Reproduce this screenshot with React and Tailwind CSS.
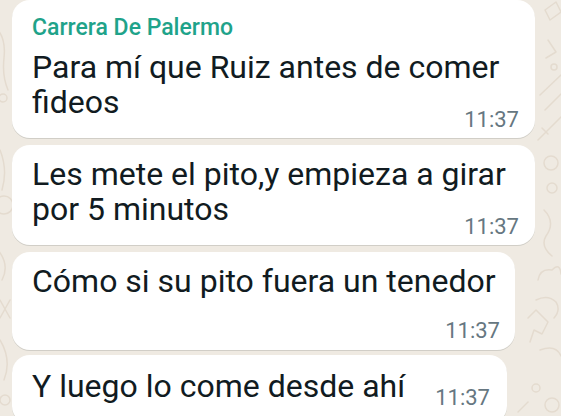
import React from 'react';

// faint chat-wallpaper doodles, sits under the bubbles
function Doodles() {
  return (
    <svg className="absolute inset-0" width="561" height="416" viewBox="0 0 561 416" fill="none" stroke="#e4dbcf" strokeWidth="1.5" strokeLinecap="round" strokeLinejoin="round">
      {/* left edge */}
      <path d="M-2 30 Q6 40 4 58 Q2 76 8 90" />
      <circle cx="3" cy="98" r="4" />
      <path d="M0 150 Q8 170 2 190" />
      <circle cx="4" cy="205" r="9" />
      <path d="M-2 250 Q10 265 2 280" />
      <path d="M0 300 L10 318 M10 300 L0 318" />
      <path d="M0 340 Q12 360 4 380" />
      <circle cx="5" cy="400" r="5" />
      {/* right edge */}
      <path d="M545 10 L556 2 L561 12 L550 20 Z" />
      <path d="M548 40 L556 52 L546 58" />
      <circle cx="554" cy="67" r="3" />
      <path d="M540 95 L561 75 M545 110 L561 94 M538 140 L561 117 M542 128 L548 134" />
      <circle cx="551" cy="163" r="7" />
      <circle cx="552" cy="188" r="5" />
      <path d="M544 210 Q556 222 546 236 Q540 246 552 256" />
      <path d="M538 280 Q540 268 552 270 Q560 262 561 274" />
      <path d="M536 300 Q548 294 556 302 Q561 310 554 318" />
      <path d="M528 318 L536 310 L548 322 L542 334 L534 330 L530 342" />
      <path d="M540 350 Q556 344 561 356" />
      <circle cx="536" cy="388" r="4" />
      <circle cx="552" cy="405" r="7" />
      <path d="M518 412 L528 402" />
    </svg>
  );
}

function Time({ className = '' }) {
  return (
    <div className={`text-[22px] leading-[26px] text-[#667781] text-right ${className}`}>11:37</div>
  );
}

export default function App() {
  const bubble = 'relative bg-white rounded-[18px] ml-[12px] pl-[20px] shadow-[0_1px_0.5px_rgba(11,20,26,0.13)]';
  const msg = 'text-[32px] leading-[35px] text-[#111b21] whitespace-nowrap';

  return (
    <div
      className="relative w-[561px] h-[416px] overflow-hidden bg-[#efeae2]"
      style={{ fontFamily: 'Roboto, "Noto Sans", sans-serif' }}
    >
      <Doodles />
      <div className="relative flex flex-col">
        {/* first message, with sender name */}
        <div className={`${bubble} w-[523px] pt-[14px] pr-[16px] pb-[5px]`}>
          <div className="text-[23px] leading-[28px] font-medium text-[#1fa38a]">Carrera De Palermo</div>
          <div className={`${msg} mt-[8px]`}>
            Para mí que Ruiz antes de comer
            <br />
            fideos
          </div>
          <Time className="-mt-[13px]" />
        </div>

        <div className={`${bubble} w-[523px] mt-[7px] pt-[12px] pr-[16px] pb-[5px]`}>
          <div className={msg}>
            Les mete el pito,y empieza a girar
            <br />
            por 5 minutos
          </div>
          <Time className="-mt-[13px]" />
        </div>

        <div className={`${bubble} w-[503px] mt-[7px] pt-[12px] pr-[15px] pb-[6px]`}>
          <div className={msg}>Cómo si su pito fuera un tenedor</div>
          <Time className="mt-[19px]" />
        </div>

        <div className={`${bubble} w-[495px] mt-[5px] pt-[14px] pr-[17px] pb-[20px]`}>
          <div className="flex items-end justify-between">
            <div className={msg}>Y luego lo come desde ahí</div>
            <Time className="translate-y-[7px]" />
          </div>
        </div>
      </div>
    </div>
  );
}
